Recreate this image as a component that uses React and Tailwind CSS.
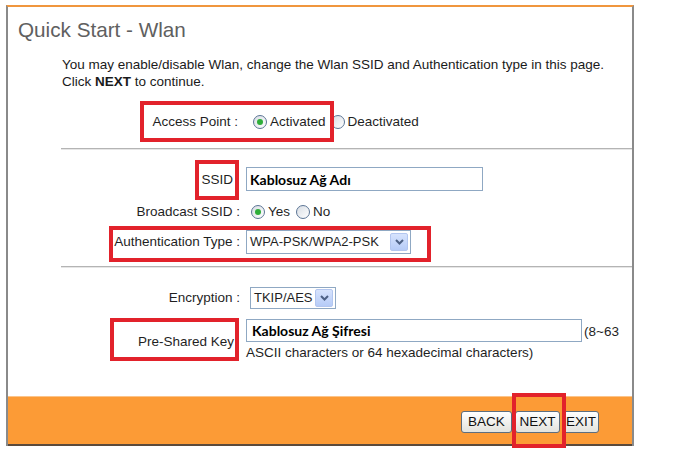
import React from "react";

function Radio({ checked }) {
  return (
    <span className="inline-flex items-center justify-center w-[14px] h-[14px] rounded-full border border-[#5b7595] bg-gradient-to-br from-[#d8dde4] to-white mr-[3px]">
      {checked && <span className="w-[6px] h-[6px] rounded-full bg-[#2fae3a]" />}
    </span>
  );
}

function Arrow() {
  return (
    <span className="flex items-center justify-center w-[18px] h-[18px] bg-gradient-to-b from-[#d7e3fd] to-[#b6cbf7] border border-[#b3c6ef] rounded-[2px]">
      <svg width="9" height="6" viewBox="0 0 9 6">
        <path d="M1 1 L4.5 4.5 L8 1" fill="none" stroke="#4d6185" strokeWidth="2" />
      </svg>
    </span>
  );
}

function Btn({ children, w }) {
  return (
    <span className={`flex items-center justify-center h-[22px] ${w} rounded-[3px] border border-[#5d6e7f] bg-gradient-to-b from-white to-[#e3e3dd] text-[13.5px] text-[#111]`}>
      {children}
    </span>
  );
}

export default function App() {
  return (
    <div className="relative w-[688px] h-[450px] bg-white overflow-hidden font-['Liberation_Sans',Arial,sans-serif] text-[13.5px] text-[#1f1f1f]">
      <div className="mt-[5px] ml-[6px] w-[628px] h-[441px] border-t-2 border-t-[#f0963e] border-l-2 border-r-2 border-l-[#8a8a8a] border-r-[#8a8a8a] flex flex-col">
        <div className="mt-[11px] ml-[10px] text-[20.7px] leading-[24px] text-[#606060]">Quick Start - Wlan</div>
        <div className="mt-[14px] ml-[54px] leading-[17px] text-[#1a1a1a]">
          <div>You may enable/disable Wlan, change the Wlan SSID and Authentication type in this page.</div>
          <div>Click <b>NEXT</b> to continue.</div>
        </div>

        <div className="mt-[20px] flex items-center h-[24px]">
          <div className="w-[232px] text-right pr-[2px]">Access Point :</div>
          <div className="ml-[13px] flex items-center">
            <Radio checked />
            <span>Activated</span>
            <span className="ml-[5px]" />
            <Radio />
            <span>Deactivated</span>
          </div>
        </div>

        <div className="mt-[14px] ml-[53px] h-[2px] bg-[#b4b4b4] border-b border-b-[#e6e6e6]" />

        <div className="mt-[17px] flex items-center h-[24px]">
          <div className="w-[232px] text-right pr-[7px] pt-[2px]">SSID</div>
          <div className="ml-[6px] w-[237px] h-[24px] border border-[#8fa8c3] flex items-center pl-[3px] font-['Lato',sans-serif] font-bold text-[14px] text-black">Kablosuz Ağ Adı</div>
        </div>

        <div className="mt-[11px] flex items-center h-[20px]">
          <div className="w-[232px] text-right">Broadcast SSID :</div>
          <div className="ml-[11px] flex items-center">
            <Radio checked />
            <span>Yes</span>
            <span className="ml-[6px]" />
            <Radio />
            <span>No</span>
          </div>
        </div>

        <div className="mt-[8px] flex items-center h-[24px]">
          <div className="w-[232px] text-right">Authentication Type :</div>
          <div className="ml-[6px] w-[165px] h-[24px] border border-[#8fa8c3] flex items-center justify-between pl-[3px] pr-[2px] text-[13px]">
            <span>WPA-PSK/WPA2-PSK</span>
            <Arrow />
          </div>
        </div>

        <div className="mt-[12px] ml-[53px] h-[2px] bg-[#b4b4b4] border-b border-b-[#e6e6e6]" />

        <div className="mt-[19px] flex items-center h-[22px]">
          <div className="w-[232px] text-right">Encryption :</div>
          <div className="ml-[10px] w-[86px] h-[22px] border border-[#8fa8c3] flex items-center justify-between pl-[3px] pr-[2px] text-[13px]">
            <span>TKIP/AES</span>
            <Arrow />
          </div>
        </div>

        <div className="mt-[9px] flex">
          <div className="w-[232px] flex items-center justify-end pr-[6px] pt-[4px]">Pre-Shared Key</div>
          <div className="ml-[6px]">
            <div className="flex items-center">
              <div className="w-[336px] h-[23px] border border-[#8fa8c3] flex items-center pl-[5px] font-['Lato',sans-serif] font-bold text-[14px] text-black">Kablosuz Ağ Şifresi</div>
              <span className="ml-[2px] mt-[4px]">(8~63</span>
            </div>
            <div className="mt-[3px] leading-[16px]">ASCII characters or 64 hexadecimal characters)</div>
          </div>
        </div>

        <div className="mt-auto h-[50px] bg-[#fc9b36] border-t border-t-[#fcc48a] border-b-2 border-b-[#5b4a3c] flex justify-end items-start pt-[14px] pr-[33px] gap-[3px]">
          <Btn w="w-[51px]">BACK</Btn>
          <Btn w="w-[45px]">NEXT</Btn>
          <Btn w="w-[36px]">EXIT</Btn>
        </div>
      </div>

      <div className="absolute left-[140px] top-[101px] w-[194px] h-[41px] border-4 border-[#e2222b]" />
      <div className="absolute left-[195px] top-[160px] w-[44px] h-[40px] border-4 border-[#e2222b]" />
      <div className="absolute left-[109px] top-[226px] w-[322px] h-[36px] border-4 border-[#e2222b]" />
      <div className="absolute left-[110px] top-[318px] w-[129px] h-[43px] border-4 border-[#e2222b]" />
      <div className="absolute left-[512px] top-[393px] w-[54px] h-[55px] border-4 border-[#e2222b]" />
    </div>
  );
}
